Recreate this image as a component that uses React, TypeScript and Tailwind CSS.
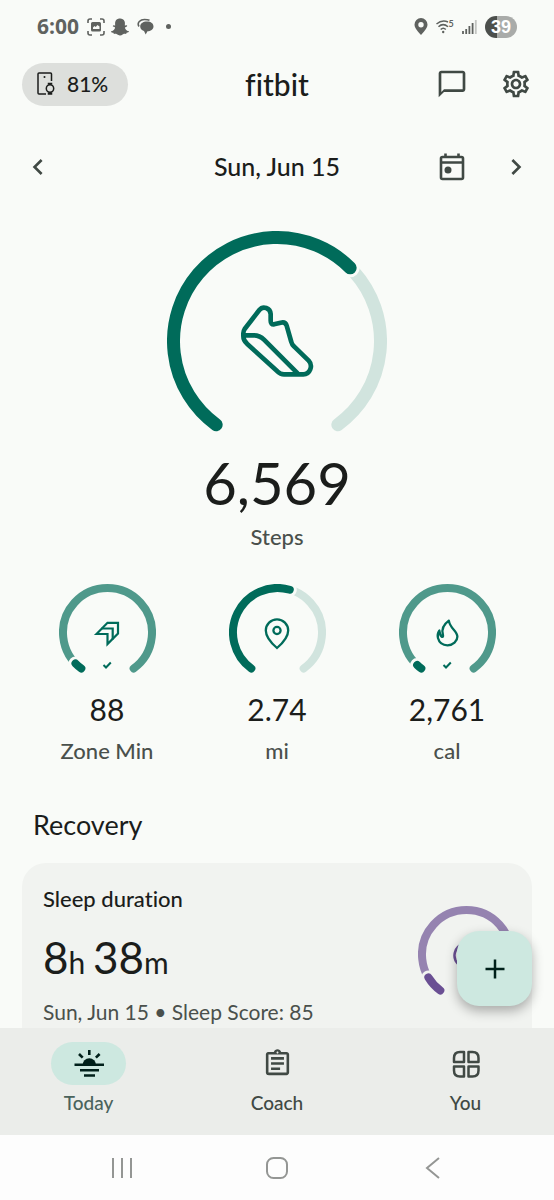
import React from "react";
import { FaSnapchatGhost } from "react-icons/fa";
import {
  MdChevronLeft,
  MdChevronRight,
  MdOutlineAssignment,
  MdOutlineChatBubbleOutline,
  MdOutlineSettings,
} from "react-icons/md";

type RingProps = {
  size: number;
  stroke: number;
  // angles are in degrees, clockwise from the top
  end: number;
  color: string;
  track: string;
  gap?: string;
  children?: React.ReactNode;
};

const START = -144;

const arc = (c: number, r: number, from: number, to: number) => {
  const point = (deg: number) => {
    const a = (deg * Math.PI) / 180;
    return `${c + r * Math.sin(a)} ${c - r * Math.cos(a)}`;
  };
  const large = to - from > 180 ? 1 : 0;
  return `M${point(from)}A${r} ${r} 0 ${large} 1 ${point(to)}`;
};

const Ring = ({ size, stroke, end, color, track, gap = "#f9fbf8", children }: RingProps) => {
  const c = size / 2;
  const r = c - stroke / 2;
  return (
    <div className="grid place-items-center">
      <svg
        className="col-start-1 row-start-1"
        width={size}
        height={size}
        fill="none"
        strokeLinecap="round"
        aria-hidden="true"
      >
        <path d={arc(c, r, START, 144)} stroke={track} strokeWidth={stroke} />
        <path d={arc(c, r, START, end)} stroke={gap} strokeWidth={stroke + 6} />
        <path d={arc(c, r, START, end)} stroke={color} strokeWidth={stroke} />
      </svg>
      <div className="col-start-1 row-start-1">{children}</div>
    </div>
  );
};

const ShoeIcon = () => (
  <svg
    width="74"
    height="74"
    viewBox="270 256 222 222"
    fill="none"
    stroke="#006b5a"
    strokeWidth="14"
    strokeLinejoin="round"
    aria-hidden="true"
  >
    <path d="M328 274L284 331Q280 337 280 344V352Q280 366 291 375L382 458Q391 467 402 467H460C480 467 490 441 476 426L432 383Q426 378 424 370L410 321C407 311 400 310 392 312L372 317Q362 318 362 306V286C361 268 339 260 328 274Z" />
    <path d="M281 350H312Q329 350 342 363L443 464" />
  </svg>
);

const ZoneIcon = () => (
  <svg width="28" height="28" viewBox="0 0 28 28" fill="none" stroke="#006b5a" strokeWidth="2.2" aria-hidden="true">
    <path d="M3.500 15L14.500 3.800H25V14.500L14.500 25V15Z" />
    <path d="M8.500 9.500H19.700V20.500" />
  </svg>
);

const PinIcon = () => (
  <svg width="32" height="34" viewBox="0 0 32 34" fill="none" stroke="#006b5a" strokeWidth="2.300" aria-hidden="true">
    <path d="M16 31C9 25 4.800 19.500 4.800 13.500a11.200 11.200 0 0 1 22.400 0C27.200 19.500 23 25 16 31Z" />
    <circle cx="16" cy="13.500" r="3.600" />
  </svg>
);

const FlameIcon = () => (
  <svg width="25" height="29" viewBox="495 143 76 88" fill="none" stroke="#006b5a" strokeWidth="7" strokeLinejoin="round" aria-hidden="true">
    <path d="M537 151C522 162 514 175 519 193C522 206 511 202 508 181C502 190 503 200 504 204C508 219 520 226 533 226C550 226 563 213 563 200C563 182 541 176 537 151Z" />
  </svg>
);

const CheckIcon = () => (
  <svg width="10" height="8" viewBox="0 0 10 8" fill="none" stroke="#006b5a" strokeWidth="2" aria-hidden="true">
    <path d="M1.500 4L4 6.500L8.800 1.500" />
  </svg>
);

const CalendarIcon = () => (
  <svg width="32" height="32" viewBox="0 0 32 32" fill="none" stroke="#404944" strokeWidth="2.600" aria-hidden="true">
    <rect x="5" y="6" width="22" height="22" rx="1.500" />
    <path d="M5 11.500H27M9.500 2.500V6M22.500 2.500V6" />
    <circle cx="12" cy="19" r="3.500" fill="#404944" stroke="none" />
  </svg>
);

const DeviceIcon = () => (
  <svg width="18" height="24" viewBox="0 0 18 24" fill="none" stroke="#1b1d1b" strokeWidth="1.500" aria-hidden="true">
    <path d="M14.500 9V2Q14.500 1 13.500 1H2Q1 1 1 2V21Q1 22 2 22H9" />
    <circle cx="13" cy="16.500" r="3.700" />
    <path d="M11.500 12.500V11.500H14.500V12.500M11.500 20.500V22H14.500V20.500" fill="#1b1d1b" />
    <circle cx="7.500" cy="5" r="1" fill="#1b1d1b" stroke="none" />
  </svg>
);

const SunIcon = () => (
  <svg width="32" height="32" viewBox="0 0 32 32" fill="none" stroke="#00201a" strokeWidth="2.600" aria-hidden="true">
    <path d="M1.500 16.800H31M7 22.200H26M11 27.500H22M16.300 2V7M6 6L9.700 9.700M26.600 6L22.900 9.700" />
    <path d="M9.500 17a6.800 6.800 0 0 1 13.600 0Z" fill="#00201a" stroke="none" />
  </svg>
);

const GridIcon = () => (
  <svg width="32" height="32" viewBox="0 0 32 32" fill="none" stroke="#404944" strokeWidth="2.500" strokeLinejoin="round" aria-hidden="true">
    <path d="M14 14H4V10Q4 4 10 4H14Z" />
    <path d="M18.500 14V4H22.500Q28.500 4 28.500 10V14Z" />
    <path d="M14 18.500V28.500H10Q4 28.500 4 22.500V18.500Z" />
    <path d="M18.500 18.500H28.500V22.500Q28.500 28.500 22.500 28.500H18.500Z" />
  </svg>
);

const StatusBar = () => (
  <div className="flex h-[53px] items-center justify-between px-[37px] text-[#5f625f]">
    <div className="flex items-center gap-2">
      <span className="font-['Open_Sans',sans-serif] text-[21px] font-bold">6:00</span>
      <svg width="18" height="18" viewBox="0 0 18 18" fill="none" stroke="currentColor" strokeWidth="1.600" aria-hidden="true">
        <path d="M1 5V3Q1 1 3 1H5M13 1H15Q17 1 17 3V5M17 13V15Q17 17 15 17H13M5 17H3Q1 17 1 15V13" />
        <path
          d="M5.500 4H12.500Q14 4 14 5.500V12Q14 13.500 12.500 13.500H5.500Q4 13.500 4 12V5.500Q4 4 5.500 4ZM6 11H12.500V8.500L10.500 7L8.700 9L7.500 8L6 9.500Z"
          fill="currentColor"
          fillRule="evenodd"
          stroke="none"
        />
      </svg>
      <FaSnapchatGhost size={18} className="-ml-0.5" />
      <svg width="17" height="17" viewBox="0 0 17 17" fill="currentColor" aria-hidden="true">
        <path d="M10 3.500C14 3.500 16.500 5.500 16.500 8.500C16.500 11.500 13.500 13.200 10.500 13.300L8.700 16.500L7 13C4.500 12.300 3.200 10.500 3.200 8.500C3.200 5.500 6 3.500 10 3.500Z" />
        <path d="M2 8.500C-.5 4.500 3.500 1.500 7.500 1.500Q10.500 1.500 12.500 2.300" fill="none" stroke="currentColor" strokeWidth="1.600" />
      </svg>
      <span className="ml-1 size-[5px] rounded-full bg-current" />
    </div>
    <div className="flex items-center gap-2">
      <svg width="14" height="17" viewBox="0 0 14 17" fill="currentColor" fillRule="evenodd" aria-hidden="true">
        <path d="M7 17C2.500 12 .5 9.500 .5 6.500a6.500 6.500 0 0 1 13 0C13.500 9.500 11.500 12 7 17ZM7 4a2.700 2.700 0 1 0 0 5.400a2.700 2.700 0 0 0 0-5.400Z" />
      </svg>
      <svg width="18" height="15" viewBox="1 0 18 15" fill="none" stroke="currentColor" strokeWidth="1.500" aria-hidden="true">
        <path d="M1.500 5Q7 .5 13 3M3.500 7.800Q8 3.500 13 7.800M5.700 10.500Q8.200 8 10.800 10.500" />
        <circle cx="8.200" cy="13" r="1.200" fill="currentColor" stroke="none" />
        <text x="13.500" y="8" fontSize="9" fontWeight="700" fontFamily="Lato, sans-serif" fill="currentColor" stroke="none">5</text>
      </svg>
      <svg width="15" height="16" viewBox="0 0 15 16" fill="none" stroke="currentColor" strokeWidth="1.800" aria-hidden="true">
        <path d="M1 12V15M4.200 10V15M7.400 7V15M10.600 4V15" />
        <path d="M13.800 1V15" opacity=".35" />
      </svg>
      <span className="flex h-[22px] w-8 items-center justify-center rounded-full bg-[linear-gradient(90deg,#4c4f4c_39%,#a9aba9_39%)] font-['Liberation_Sans',sans-serif] text-lg font-bold leading-none text-white">
        39
      </span>
    </div>
  </div>
);

const Header = () => (
  <header className="grid h-[62px] grid-cols-[1fr_auto_1fr] items-center px-[22px]">
    <button className="flex h-[43px] w-[106px] items-center gap-3 rounded-full bg-[#dddfdc] pl-[15px] text-[21px] font-medium">
      <DeviceIcon />
      81%
    </button>
    <h1 className="text-[30px] font-medium leading-9">fitbit</h1>
    <div className="flex items-center justify-end gap-8 text-[#404944]">
      <button aria-label="Messages">
        <MdOutlineChatBubbleOutline size={32} />
      </button>
      <button aria-label="Settings">
        <MdOutlineSettings size={32} />
      </button>
    </div>
  </header>
);

const DateRow = () => (
  <div className="grid h-[104px] grid-cols-[1fr_auto_1fr] items-center px-[22px]">
    <button aria-label="Previous day" className="justify-self-start text-[#404944]">
      <MdChevronLeft size={32} />
    </button>
    <h2 className="text-[25px] font-medium">Sun, Jun 15</h2>
    <div className="flex items-center justify-end gap-8 text-[#404944]">
      <button aria-label="Pick a date">
        <CalendarIcon />
      </button>
      <button aria-label="Next day">
        <MdChevronRight size={32} />
      </button>
    </div>
  </div>
);

const stats = [
  { label: "Zone Min", value: "88", icon: <ZoneIcon />, end: -134, done: true },
  { label: "mi", value: "2.74", icon: <PinIcon />, end: 16, done: false },
  { label: "cal", value: "2,761", icon: <FlameIcon />, end: -137, done: true },
];

const Stats = () => (
  <div className="grid grid-cols-3 px-[22px] pt-[33px]">
    {stats.map((s) => (
      <div key={s.label} className="flex flex-col items-center">
        <Ring size={97} stroke={8} end={s.end} color="#006b5a" track={s.done ? "#4f998b" : "#d1e4de"}>
          <div className="relative grid size-8 place-items-center">
            {s.icon}
            {s.done && (
              <span className="absolute left-1/2 top-full -translate-x-1/2 pt-3">
                <CheckIcon />
              </span>
            )}
          </div>
        </Ring>
        <p className="mt-2 text-[30px] leading-10 text-[#1b1d1b]">{s.value}</p>
        <p className="mt-2 text-[22px] font-medium leading-7 text-[#4a504c]">{s.label}</p>
      </div>
    ))}
  </div>
);

const SleepCard = () => (
  <div className="flex justify-between rounded-3xl bg-[#f1f3f0] pt-[22px] pr-[17px] pb-8 pl-[21px]">
    <div>
      <h4 className="text-[22px] font-medium leading-7">Sleep duration</h4>
      <p className="mt-4 text-[44px] leading-[56px]">
        8<span className="text-[30px]">h </span>38<span className="text-[30px]">m</span>
      </p>
      <p className="mt-2 text-[21px] leading-7 text-[#4a504c]">Sun, Jun 15 • Sleep Score: 85</p>
    </div>
    <div className="pt-[21px]">
      <Ring size={97} stroke={8} end={-121} color="#6a4f93" track="#9583b0" gap="#f1f3f0">
        <svg width="28" height="28" viewBox="0 0 28 28" fill="none" stroke="#6a4f93" strokeWidth="2.500" aria-hidden="true">
          <path d="M10 3A12 12 0 1 0 25 18A10 10 0 0 1 10 3Z" />
        </svg>
      </Ring>
    </div>
  </div>
);

const BottomNav = () => (
  <nav className="relative flex justify-between bg-[#ebedea] px-[51px] pt-[14px] pb-[18px] text-[19px] font-medium leading-7 text-[#404944]">
    <button
      aria-label="Add"
      className="absolute right-[22px] bottom-full mb-[22px] grid size-[75px] place-items-center rounded-[22px] bg-[#cde8e0] shadow-[0_5px_12px_rgba(0,0,0,0.3)]"
    >
      <svg width="20" height="20" viewBox="0 0 20 20" stroke="#00201a" strokeWidth="2.500" aria-hidden="true">
        <path d="M10 .5V19.500M.5 10H19.500" />
      </svg>
    </button>
    <a href="#today" className="flex flex-col items-center gap-1 text-[#4a635c]">
      <span className="grid h-[43px] w-[75px] place-items-center rounded-full bg-[#cde8e0]">
        <SunIcon />
      </span>
      Today
    </a>
    <a href="#coach" className="flex flex-col items-center gap-1">
      <span className="grid h-[43px] w-[75px] place-items-center">
        <MdOutlineAssignment size={31} />
      </span>
      Coach
    </a>
    <a href="#you" className="flex flex-col items-center gap-1">
      <span className="grid h-[43px] w-[75px] place-items-center">
        <GridIcon />
      </span>
      You
    </a>
  </nav>
);

const SystemNav = () => (
  <div className="flex h-[65px] items-center justify-around bg-[#fdfdfd] px-[45px] text-[#949694]">
    <button aria-label="Recent apps">
      <svg width="22" height="22" viewBox="0 0 22 22" stroke="currentColor" strokeWidth="2" aria-hidden="true">
        <path d="M2 1V21M11 1V21M20 1V21" />
      </svg>
    </button>
    <button aria-label="Home">
      <svg width="24" height="24" viewBox="0 0 24 24" fill="none" stroke="currentColor" strokeWidth="2" aria-hidden="true">
        <rect x="2" y="2" width="20" height="20" rx="6.500" />
      </svg>
    </button>
    <button aria-label="Back">
      <svg width="22" height="22" viewBox="0 0 22 22" fill="none" stroke="currentColor" strokeWidth="2" aria-hidden="true">
        <path d="M18 1L6 11L18 21" />
      </svg>
    </button>
  </div>
);

const App = () => {
  return (
    <div className="flex h-screen flex-col bg-[#f9fbf8] font-['Lato',sans-serif] text-[#1b1d1b] [font-variant-ligatures:none]">
      <StatusBar />
      <Header />
      <main className="min-h-0 flex-1 overflow-y-auto [scrollbar-width:none]">
        <DateRow />
        <section className="flex flex-col items-center pt-3">
          <Ring size={220} stroke={13} end={45} color="#006b5a" track="#d1e4de">
            <ShoeIcon />
          </Ring>
          <p className="text-[58px] leading-[64px]">6,569</p>
          <p className="mt-2 text-[22px] font-medium leading-7 text-[#4a504c]">Steps</p>
        </section>
        <Stats />
        <section className="px-[22px] pt-[42px]">
          <h3 className="mb-5 px-[11px] text-[27px] leading-9">Recovery</h3>
          <SleepCard />
        </section>
      </main>
      <BottomNav />
      <SystemNav />
    </div>
  );
};

export default App;
